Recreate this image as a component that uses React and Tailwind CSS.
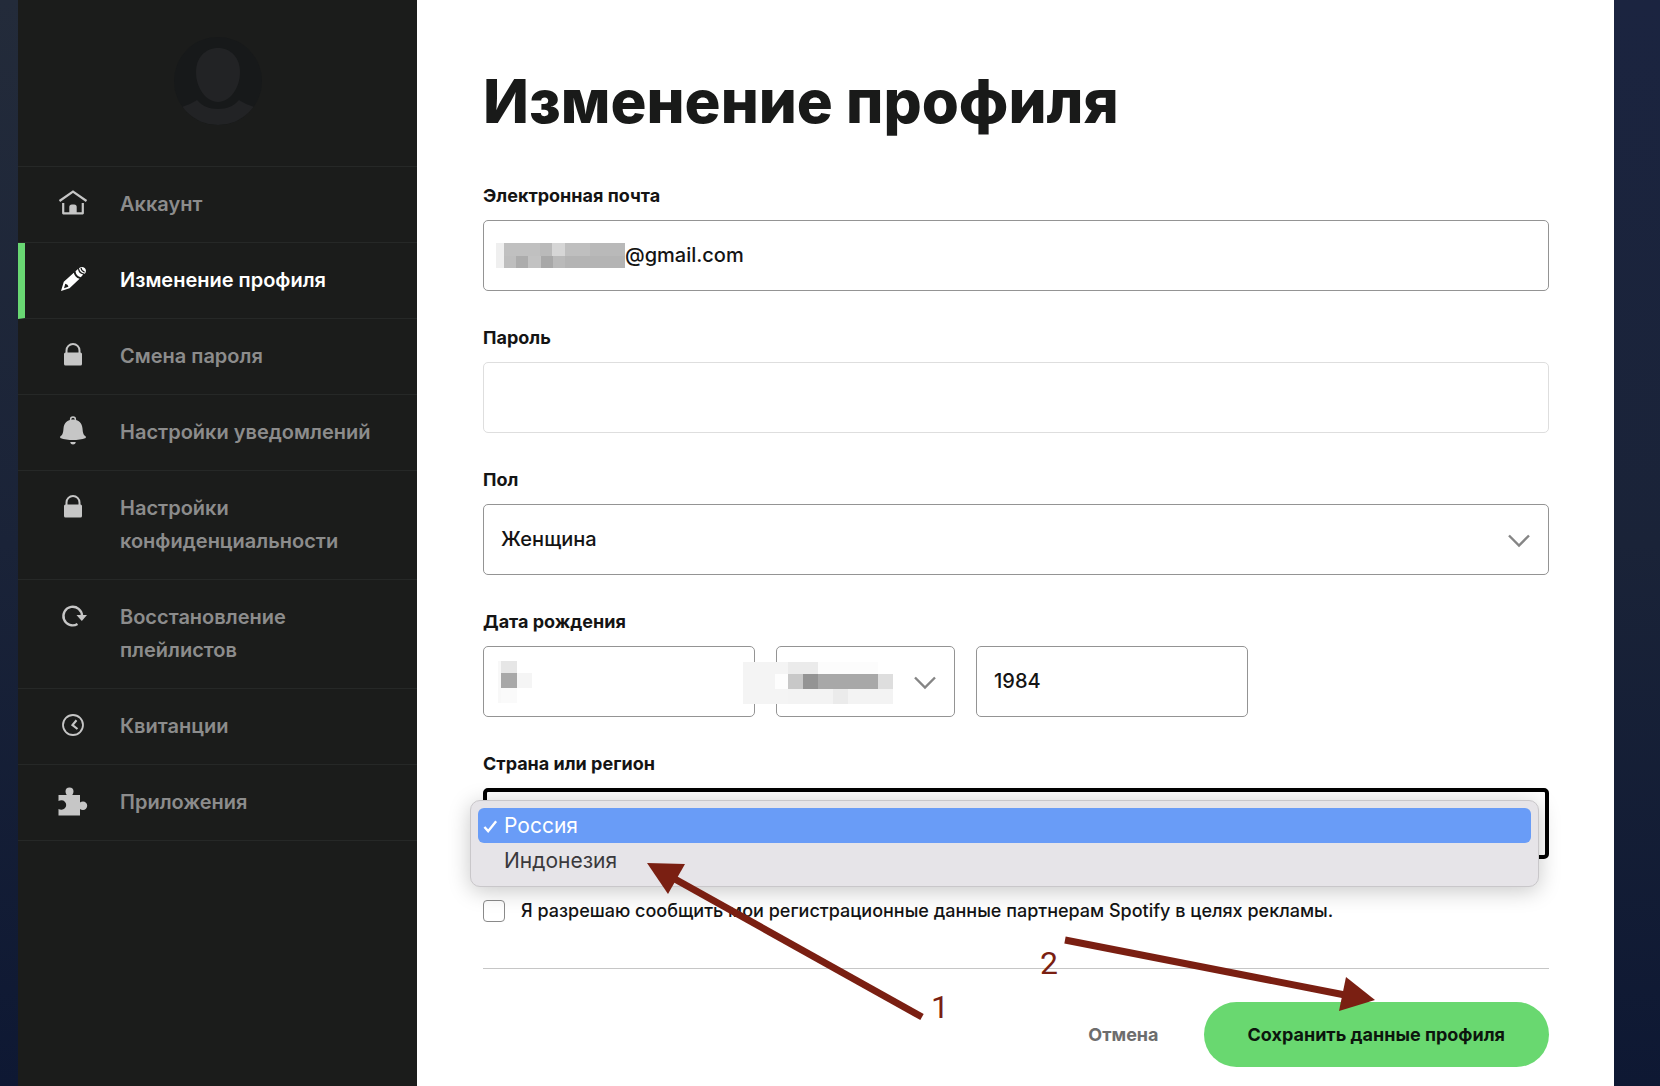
import React, { useState } from "react";

const HomeIcon = () => (
  <svg viewBox="0 0 30 30" className="size-[30px]" fill="none" stroke="currentColor" strokeWidth="2.200">
    <path d="M1.500 13 15 3.500l13.500 9.500" />
    <path d="M5.200 15v10.300h19.600V15" strokeWidth="2.200" strokeLinejoin="round" />
    <path d="M11.300 25.500V19a2.500 2.500 0 0 1 2.500-2.500h2.400a2.500 2.500 0 0 1 2.500 2.500V25.500z" fill="currentColor" stroke="none" />
  </svg>
);

const PencilIcon = () => (
  <svg viewBox="0 0 30 30" className="size-[30px]" fill="currentColor">
    <path d="M3 27 5.800 17.800 15.800 8.800c.6 3 2.600 5.200 5.800 6L11.500 24.300z" />
    <path d="M17.500 7.300 20 5c.3 3 2 4.900 5.200 5.500l-2.400 2.700c-3-.6-5-2.600-5.300-5.900z" />
    <path d="M21 4.200c1.800-1.700 4-1.700 5.700-.1 1.600 1.600 1.700 3.800.2 5.600-3.600-.6-5.300-2.300-5.900-5.500z" />
    <path d="M23 3.800c.2 2 1.400 3.600 3.600 4.300" fill="none" stroke="#1b1c1b" strokeWidth="1.200" />
    <path d="M6 24.200 7.300 19.800c1.700.4 2.600 1.200 3.100 2.900z" fill="#1b1c1b" />
  </svg>
);

const LockIcon = () => (
  <svg viewBox="0 0 30 30" className="size-[30px]">
    <path d="M8.500 14V10.500a6.500 6.500 0 0 1 13 0V14" fill="none" stroke="currentColor" strokeWidth="2" />
    <rect x="6" y="12.500" width="18" height="13" rx="1.500" fill="currentColor" />
  </svg>
);

const BellIcon = () => (
  <svg viewBox="0 0 30 30" className="size-[30px]" fill="currentColor">
    <circle cx="15" cy="3.500" r="2.400" fill="none" stroke="currentColor" strokeWidth="1.500" />
    <path d="M15 3.500c5.800 0 9 3.500 9.500 9 .4 4.500.8 6.300 3.300 8v1.500c-4 1.500-8.300 2-12.800 2s-8.800-.5-12.800-2v-1.500c2.500-1.700 2.900-3.500 3.300-8 .5-5.500 3.700-9 9.500-9z" />
    <path d="M12.200 26h5.600c-.5 1.800-1.400 2.500-2.800 2.500s-2.300-.7-2.800-2.500z" />
  </svg>
);

const RestoreIcon = () => (
  <svg viewBox="0 0 30 30" className="size-[30px]">
    <path d="M19.500 23A9.300 9.300 0 1 1 24 15" fill="none" stroke="currentColor" strokeWidth="2.400" />
    <path d="M18.500 14h10.500l-5.200 6z" fill="currentColor" />
  </svg>
);

const ClockIcon = () => (
  <svg viewBox="0 0 30 30" className="size-[30px]" fill="none" stroke="currentColor" strokeWidth="1.800">
    <circle cx="15" cy="15" r="10" />
    <path d="M18.500 10.300 14.500 15l5 4" strokeWidth="2.200" />
  </svg>
);

const PuzzleIcon = () => (
  <svg viewBox="0 0 30 30" className="size-[30px]" fill="currentColor">
    <path d="M.5 9h8.200C7.900 7.800 7.500 6.800 7.500 5.500a4 4 0 0 1 8 0c0 1.300-.4 2.300-1.200 3.500H22v7.500c.8-.7 1.800-1 3-1a4.200 4.200 0 0 1 0 8.400c-1.200 0-2.200-.3-3-1V29.500H.5V23c.8.300 1.800.7 3 .7a4.700 4.700 0 0 0 0-9.400c-1.200 0-2.200.4-3 .7z" />
  </svg>
);

const NAV = [
  { label: "Аккаунт", Icon: HomeIcon },
  { label: "Изменение профиля", Icon: PencilIcon, active: true },
  { label: "Смена пароля", Icon: LockIcon },
  { label: "Настройки уведомлений", Icon: BellIcon },
  { label: "Настройки конфиденциальности", Icon: LockIcon },
  { label: "Восстановление плейлистов", Icon: RestoreIcon },
  { label: "Квитанции", Icon: ClockIcon },
  { label: "Приложения", Icon: PuzzleIcon },
];

function Sidebar() {
  return (
    <aside className="w-[399px] shrink-0 bg-[#1b1c1b] text-[20px] leading-[33px] font-semibold">
      <div className="flex h-[167px] items-start justify-center border-b border-[#262827] pt-[37px]">
        <svg viewBox="0 0 88 88" className="size-[88px]" role="img" aria-label="Аватар">
          <defs>
            <clipPath id="avatar-clip">
              <circle cx="44" cy="44" r="44" />
            </clipPath>
          </defs>
          <circle cx="44" cy="44" r="44" fill="#17191a" />
          <g fill="#222325" clipPath="url(#avatar-clip)">
            <path d="M44 11c13 0 22 10 22 24 0 16-10 30-22 30S22 51 22 35c0-14 9-24 22-24z" />
            <path d="M8 70c5-2 11-4 15-7 5 6 12 9 21 9s16-3 21-9c4 3 10 5 15 7-8 12-20 18-36 18S16 82 8 70z" />
          </g>
        </svg>
      </div>
      <nav>
        {NAV.map(({ label, Icon, active }) => (
          <a
            key={label}
            href="#"
            aria-current={active ? "page" : undefined}
            className={
              active
                ? "flex border-b border-l-[7px] border-b-[#262827] border-l-[#69d773] py-[21px] pr-8 pl-[33px] text-white"
                : "flex border-b border-[#262827] py-[21px] pr-8 pl-10 text-[#8c8c8c]"
            }
          >
            <span className={active ? "mr-8 text-white" : "mr-8 text-[#c6c6c6]"}>
              <Icon />
            </span>
            <span>{label}</span>
          </a>
        ))}
      </nav>
    </aside>
  );
}

function Mosaic({ width, height, cells, className }) {
  return (
    <svg aria-hidden="true" width={width} height={height} className={className} shapeRendering="crispEdges">
      {cells.map(([x, y, w, h, fill], i) => (
        <rect key={i} x={x} y={y} width={w} height={h} fill={fill} />
      ))}
    </svg>
  );
}

const EMAIL_CELLS = [
  [0, 0, 8, 25, "#efefef"],
  [8, 0, 48, 13, "#c0c0c0"],
  [44, 0, 12, 13, "#bababa"],
  [56, 0, 13, 13, "#d6d6d6"],
  [69, 0, 25, 13, "#bfbfbf"],
  [94, 0, 35, 13, "#b9b9b9"],
  [8, 13, 12, 12, "#bebebe"],
  [20, 13, 12, 12, "#acacac"],
  [32, 13, 13, 12, "#c2c2c2"],
  [45, 13, 12, 12, "#a8a8a8"],
  [57, 13, 12, 12, "#bababa"],
  [69, 13, 60, 12, "#b4b4b4"],
];

const DAY_CELLS = [
  [0, 0, 3, 42, "#f8f8f8"],
  [3, 0, 16, 12, "#e6e6e6"],
  [3, 12, 16, 15, "#a8a8a8"],
  [19, 12, 15, 15, "#f5f5f5"],
  [3, 27, 16, 15, "#fafafa"],
];

const MONTH_CELLS = [
  [0, 0, 45, 42, "#f4f4f4"],
  [32, 12, 13, 15, "#fdfdfd"],
  [45, 0, 30, 12, "#ebebeb"],
  [75, 0, 60, 12, "#fcfcfc"],
  [45, 12, 15, 15, "#c8c8c8"],
  [60, 12, 15, 15, "#949494"],
  [75, 12, 60, 15, "#a8a8a8"],
  [135, 12, 15, 15, "#dedede"],
  [45, 27, 105, 15, "#f3f3f3"],
  [90, 27, 15, 15, "#ebebeb"],
];

const Chevron = ({ className }) => (
  <svg viewBox="0 0 22 14" className={className} fill="none" stroke="#858585" strokeWidth="2.400">
    <path d="M1 1.500 11 11.500 21 1.500" />
  </svg>
);

const LABEL = "block pb-3 text-[18px] leading-[24px] font-bold text-[#141414]";
const BOX = "h-[71px] w-full rounded-[5px] border border-[#949494] bg-white";

function Field({ id, label, children }) {
  return (
    <div className="mb-[35px]">
      <label htmlFor={id} className={LABEL}>
        {label}
      </label>
      {children}
    </div>
  );
}

function CountryField() {
  const options = ["Россия", "Индонезия"];
  const [value, setValue] = useState("Россия");
  return (
    <div>
      <label id="country-label" htmlFor="country" className={LABEL}>
        Страна или регион
      </label>
      <div className="relative">
        <button
          id="country"
          type="button"
          aria-haspopup="listbox"
          aria-expanded="true"
          aria-labelledby="country-label"
          className="block h-[71px] w-full rounded-[5px] border-4 border-black bg-white"
        />
        <ul
          role="listbox"
          aria-labelledby="country-label"
          className="absolute top-[12px] right-[10px] -left-[13px] rounded-[10px] border border-[#c9c7ca] bg-[#e6e4e8] px-[7px] pt-[7px] pb-2 text-[21px] leading-[35px] text-[#3a393c] shadow-[0_4px_22px_rgba(0,0,0,0.22)]"
        >
          {options.map((option) => {
            const selected = option === value;
            return (
              <li
                key={option}
                role="option"
                aria-selected={selected}
                onClick={() => setValue(option)}
                className={
                  selected
                    ? "flex items-center rounded-[6px] bg-[#699cf7] pl-[5px] text-white"
                    : "flex items-center pl-[5px]"
                }
              >
                <svg
                  viewBox="0 0 16 16"
                  aria-hidden="true"
                  className="mr-[6px] size-[15px]"
                  fill="none"
                  stroke={selected ? "currentColor" : "none"}
                  strokeWidth="2.500"
                >
                  <path d="M1.500 9.500 5.500 14 14 3.500" />
                </svg>
                {option}
              </li>
            );
          })}
        </ul>
      </div>
    </div>
  );
}

function Annotations() {
  return (
    <svg
      aria-hidden="true"
      width="740"
      height="170"
      className="pointer-events-none absolute top-[858px] left-[643px] z-10"
      fill="#7a1f12"
      fontFamily="Roboto, sans-serif"
      fontSize="32"
    >
      <path d="M30 20 279 159" stroke="#7a1f12" strokeWidth="7" />
      <path d="M4 5 42 6 25 36z" />
      <path d="M422 82 702 137" stroke="#7a1f12" strokeWidth="7" />
      <path d="M732 142 703 119 696 153z" />
      <text x="288" y="160">1</text>
      <text x="397" y="116">2</text>
    </svg>
  );
}

export default function App() {
  return (
    <div className="relative flex min-h-screen font-['Inter','Noto_Sans',sans-serif]">
      <div className="w-[18px] shrink-0 bg-linear-to-b from-[#232b3a] via-[#1a2338] to-[#0e1833]" />
      <Sidebar />
      <main className="min-w-0 flex-1 bg-white pt-[56px] pr-[65px] pb-[19px] pl-[66px] text-[#141414]">
        <h1 className="mb-[38px] text-[60px] leading-[90px] font-extrabold text-[#191a19]">Изменение профиля</h1>
        <form onSubmit={(e) => e.preventDefault()}>
          <Field id="email" label="Электронная почта">
            <div className={BOX + " flex items-center pl-3"}>
              <Mosaic width={129} height={25} cells={EMAIL_CELLS} className="shrink-0" />
              <input
                id="email"
                type="text"
                defaultValue="@gmail.com"
                className="h-full min-w-0 flex-1 bg-transparent pb-[2px] text-[20px] font-medium outline-none"
              />
            </div>
          </Field>
          <Field id="password" label="Пароль">
            <input
              id="password"
              type="password"
              className="block h-[71px] w-full rounded-[5px] border border-[#dedede] bg-white px-[17px] outline-none"
            />
          </Field>
          <Field id="gender" label="Пол">
            <div className="relative">
              <select
                id="gender"
                defaultValue="f"
                className={BOX + " block appearance-none px-[17px] pb-[2px] text-[20px] font-medium outline-none"}
              >
                <option value="f">Женщина</option>
                <option value="m">Мужчина</option>
              </select>
              <Chevron className="pointer-events-none absolute top-[30px] right-[19px] w-[22px]" />
            </div>
          </Field>
          <Field id="day" label="Дата рождения">
            <div className="flex gap-[21px]">
              <div className={BOX + " flex max-w-[272px] items-center pl-[14px]"}>
                <Mosaic width={34} height={42} cells={DAY_CELLS} className="shrink-0" />
                <input id="day" type="text" className="h-full min-w-0 flex-1 bg-transparent outline-none" />
              </div>
              <div className="relative w-[179px]">
                <select aria-label="Месяц" className={BOX + " block appearance-none outline-none"}>
                  <option value="" />
                </select>
                <Mosaic
                  width={150}
                  height={42}
                  cells={MONTH_CELLS}
                  className="pointer-events-none absolute top-[16px] -left-[33px]"
                />
                <Chevron className="pointer-events-none absolute top-[30px] right-[19px] w-[22px]" />
              </div>
              <input
                type="text"
                aria-label="Год"
                defaultValue="1984"
                className={BOX + " max-w-[272px] px-[17px] pb-[2px] text-[20px] font-medium outline-none"}
              />
            </div>
          </Field>
          <CountryField />
          <label className="mt-[36px] flex items-center text-[18px] leading-[32px] font-medium">
            <input
              type="checkbox"
              className="mr-4 size-[22px] shrink-0 appearance-none rounded-[4px] border border-[#8a8a8a] bg-white"
            />
            Я разрешаю сообщить мои регистрационные данные партнерам Spotify в целях рекламы.
          </label>
          <div className="mt-[41px] flex items-center justify-end border-t border-[#c6c6c6] pt-[33px] text-[18px] font-bold">
            <button type="button" className="mr-[45px] text-[#6d6d6d]">
              Отмена
            </button>
            <button type="submit" className="h-[65px] rounded-full bg-[#69d870] px-11 text-[#0c160d]">
              Сохранить данные профиля
            </button>
          </div>
        </form>
      </main>
      <div className="w-[46px] shrink-0 bg-linear-to-b from-[#1b2440] via-[#1a2338] to-[#0e1833]" />
      <Annotations />
    </div>
  );
}
